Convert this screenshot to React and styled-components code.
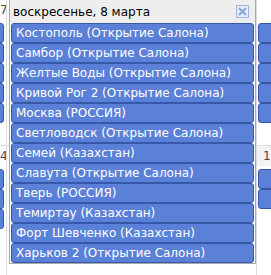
import React from "react";
import styled, { createGlobalStyle } from "styled-components";

const GlobalStyle = createGlobalStyle`
  html, body {
    margin: 0;
    padding: 0;
    background: #fff;
  }
  body {
    font-family: "DejaVu Sans", Verdana, sans-serif;
  }
`;

const events = [
  "Костополь (Открытие Салона)",
  "Самбор (Открытие Салона)",
  "Желтые Воды (Открытие Салона)",
  "Кривой Рог 2 (Открытие Салона)",
  "Москва (РОССИЯ)",
  "Светловодск (Открытие Салона)",
  "Семей (Казахстан)",
  "Славута (Открытие Салона)",
  "Тверь (РОССИЯ)",
  "Темиртау (Казахстан)",
  "Форт Шевченко (Казахстан)",
  "Харьков 2 (Открытие Салона)",
];

const App = () => {
  return (
    <>
      <GlobalStyle />
      <Calendar>
        <Grid>
          <DayCell>
            <DayNum>7</DayNum>
            {[0, 1, 2, 3, 4].map((i) => (
              <Stub key={i} side="left" />
            ))}
          </DayCell>
          <DayCell />
          <DayCell>
            <DayNum />
            {[0, 1, 2, 3, 4].map((i) => (
              <Stub key={i} side="right" />
            ))}
          </DayCell>
          <DayCell top>
            <DayNum>4</DayNum>
            {[0, 1, 2].map((i) => (
              <Stub key={i} side="left" />
            ))}
          </DayCell>
          <DayCell top />
          <DayCell top>
            <DayNum shaded align="left">
              1
            </DayNum>
            {[0, 1].map((i) => (
              <Stub key={i} side="right" />
            ))}
          </DayCell>
        </Grid>

        <Popover>
          <PopHeader>
            <PopTitle>воскресенье, 8 марта</PopTitle>
            <CloseIcon width="13" height="13" viewBox="0 0 13 13">
              <rect x="0.5" y="0.5" width="12" height="12" fill="#e6edf8" stroke="#9fb4d8" />
              <path d="M3 3 L10 10 M10 3 L3 10" stroke="#8aa3d2" strokeWidth="2" />
            </CloseIcon>
          </PopHeader>
          <PopBody>
            {events.map((e) => (
              <Event key={e}>{e}</Event>
            ))}
          </PopBody>
        </Popover>
      </Calendar>
    </>
  );
};

export default App;

const Calendar = styled.div`
  position: relative;
  width: 271px;
  height: 275px;
  overflow: hidden;
`;

const Grid = styled.div`
  display: grid;
  grid-template-columns: 7px 250px 14px;
  grid-template-rows: 145px 130px;
`;

const DayCell = styled.div`
  overflow: hidden;
  border-top: ${(p) => (p.top ? "1px solid #ddd" : "none")};
  border-right: 1px solid #ddd;
  &:nth-child(3n) {
    border-right: none;
  }
`;

const DayNum = styled.div`
  height: 20px;
  margin-bottom: 3px;
  padding-top: 2px;
  box-sizing: border-box;
  font-size: 12px;
  line-height: 16px;
  color: #444;
  text-align: ${(p) => p.align || "right"};
  padding-left: ${(p) => (p.align === "left" ? "6px" : "0")};
  background: ${(p) => (p.shaded ? "#f2f2f2" : "transparent")};
  white-space: nowrap;
`;

const Stub = styled.div`
  height: 20px;
  box-sizing: border-box;
  background: #5b80d8;
  border: 1px solid #3558a8;
  border-radius: 3px;
  margin-left: ${(p) => (p.side === "left" ? "-6px" : "1px")};
  margin-right: ${(p) => (p.side === "left" ? "2px" : "-6px")};
`;

const Popover = styled.div`
  position: absolute;
  left: 9px;
  top: 0;
  width: 247px;
  box-sizing: border-box;
  background: #fff;
  border: 1px solid #aaa;
  border-top: none;
`;

const PopHeader = styled.div`
  display: flex;
  align-items: center;
  justify-content: space-between;
  height: 23px;
  padding: 0 6px 0 3px;
  background: #eeeeee;
  box-sizing: border-box;
`;

const PopTitle = styled.span`
  font-size: 12px;
  color: #000;
`;

const CloseIcon = styled.svg`
  display: block;
`;

const PopBody = styled.div`
  padding: 0 1px;
`;

const Event = styled.div`
  height: 20px;
  box-sizing: border-box;
  background: #5b80d8;
  border: 1px solid #3558a8;
  border-radius: 3px;
  padding-left: 4px;
  color: #fff;
  font-size: 12px;
  line-height: 18px;
  white-space: nowrap;
  overflow: hidden;
`;
